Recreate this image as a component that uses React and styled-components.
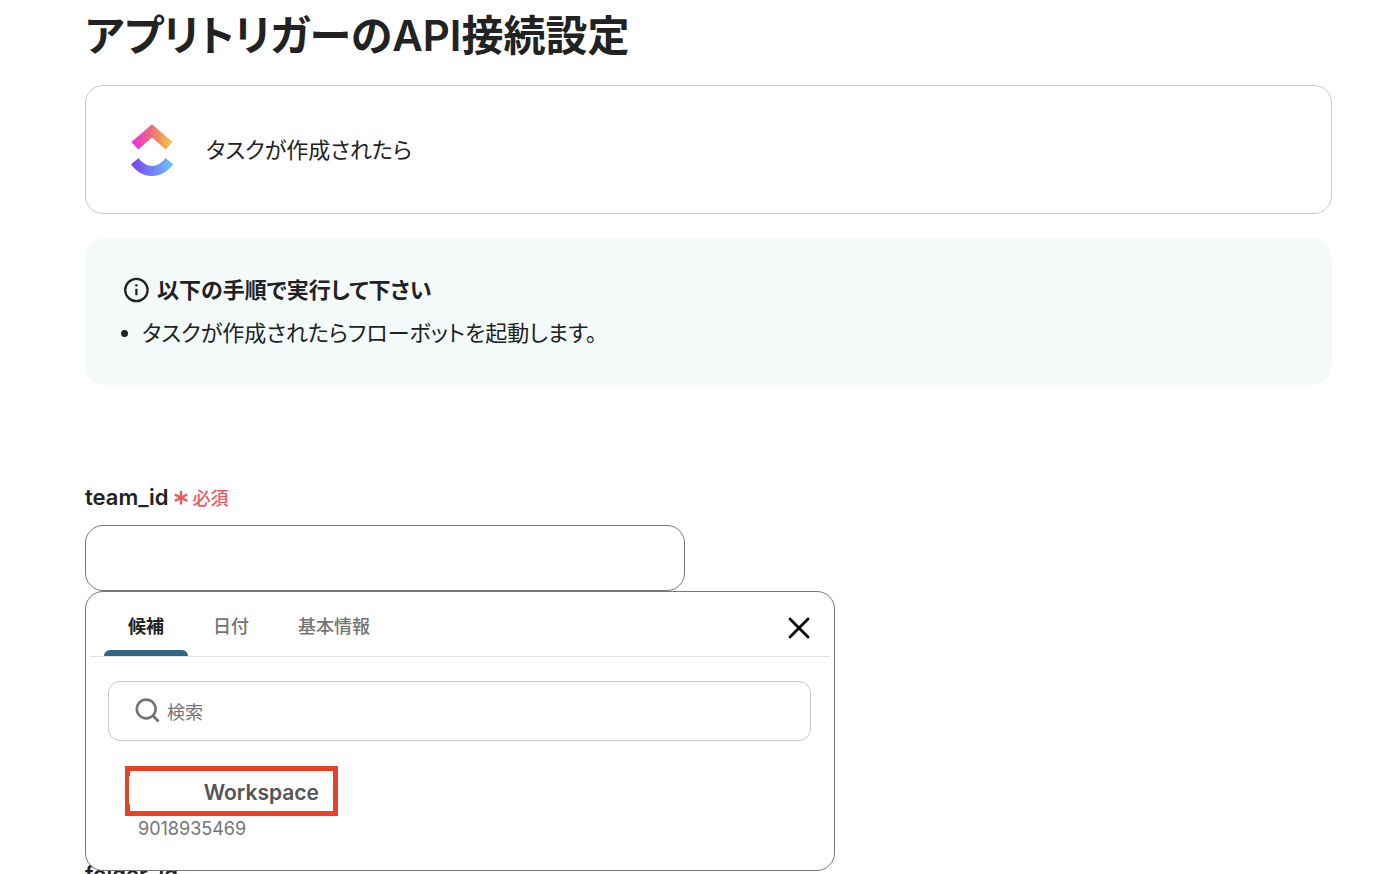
import { useState } from "react";
import styled, { createGlobalStyle } from "styled-components";

const GlobalStyle = createGlobalStyle`
  *, *::before, *::after {
    box-sizing: border-box;
  }

  html {
    overflow: hidden;
  }

  body {
    margin: 0;
    background: #fff;
    color: #222;
    font-family: Inter, "Noto Sans CJK JP", sans-serif;
    font-feature-settings: "palt";
  }

  button, input {
    font: inherit;
    font-feature-settings: inherit;
  }
`;

const Page = styled.main`
  padding: 4px 44px 0 85px;
`;

const Title = styled.h1`
  margin: 0 0 17px;
  font-size: 42px;
  line-height: 64px;
  font-weight: 600;
`;

const TriggerCard = styled.section`
  display: flex;
  align-items: center;
  gap: 32px;
  padding: 38px 45px 37px;
  border: 1px solid #c8c8c8;
  border-radius: 18px;
  font-size: 22px;
  line-height: 30px;
`;

const Notice = styled.section`
  margin: 24px 0 96px;
  padding: 36px 38px;
  border-radius: 20px;
  background: #f4fafa;
  font-size: 22px;
  line-height: 32px;
`;

const NoticeTitle = styled.h2`
  display: flex;
  align-items: center;
  gap: 8px;
  margin: 0 0 11px;
  font-size: 22px;
  line-height: 32px;
  font-weight: 600;
`;

const NoticeList = styled.ul`
  margin: 0;
  padding-left: 19px;
`;

const Field = styled.div`
  position: relative;
  min-height: 377px;
`;

const Label = styled.label`
  display: flex;
  align-items: center;
  gap: 5px;
  height: 32px;
  margin-bottom: 12px;
  font-size: 22px;
  font-weight: 600;
`;

const Required = styled.span`
  display: flex;
  align-items: center;
  gap: 5px;
  color: #eb5a5f;
  font-size: 18px;
  font-weight: 500;
`;

const TextInput = styled.input`
  display: block;
  width: 600px;
  max-width: 100%;
  height: 66px;
  padding: 0 24px;
  border: 1px solid #777;
  border-radius: 18px;
  background: #fff;
  font-size: 22px;
  outline: none;
`;

const Popup = styled.div`
  position: absolute;
  top: 100%;
  left: 0;
  z-index: 1;
  width: 750px;
  height: 280px;
  border: 1px solid #777;
  border-radius: 18px;
  background: #fff;
`;

const InputWrap = styled.div`
  position: relative;
`;

const TabBar = styled.div`
  display: flex;
  align-items: stretch;
  gap: 1px;
  height: 65px;
  margin: 0 4px;
  padding: 0 15px 0 14px;
  border-bottom: 1px solid #e2e2e2;
`;

const Tab = styled.button`
  display: flex;
  flex-direction: column;
  justify-content: space-between;
  padding: 19px 0 0;
  border: none;
  background: none;
  color: ${({ $active }) => ($active ? "#222" : "#757575")};
  font-size: 18px;
  line-height: 32px;
  font-weight: ${({ $active }) => ($active ? 600 : 500)};
  cursor: pointer;

  span {
    padding: 0 24px;
  }

  &::after {
    content: "";
    width: 100%;
    height: 6px;
    border-radius: 6px 6px 0 0;
    background: ${({ $active }) => ($active ? "#30687f" : "transparent")};
  }
`;

const CloseButton = styled.button`
  display: flex;
  align-items: center;
  justify-content: center;
  width: 32px;
  margin-left: auto;
  padding: 8px 0 0;
  border: none;
  background: none;
  color: #000;
  cursor: pointer;
`;

const SearchBox = styled.label`
  display: flex;
  align-items: center;
  gap: 6px;
  height: 60px;
  margin: 24px 23px 25px 22px;
  padding: 0 26px;
  border: 1px solid #c8c8c8;
  border-radius: 12px;
  color: #757575;
`;

const SearchInput = styled.input`
  flex: 1;
  min-width: 0;
  padding: 4px 0 0;
  border: none;
  background: none;
  font-size: 18px;
  line-height: 32px;
  outline: none;

  &::placeholder {
    color: #757575;
    opacity: 1;
  }
`;

const Candidate = styled.button`
  display: block;
  margin-left: 39px;
  padding: 0;
  border: none;
  background: none;
  text-align: left;
  cursor: pointer;
`;

const CandidateName = styled.span`
  position: relative;
  display: flex;
  align-items: center;
  justify-content: flex-end;
  width: 213px;
  height: 50px;
  padding: 2px 14px 0 0;
  border: 5px solid #ea4025;
  color: #555;
  font-size: 21px;
  font-weight: 600;

  /* blank patch over the hidden part of the name */
  &::before {
    content: "";
    position: absolute;
    top: 5px;
    bottom: 7px;
    left: -1px;
    width: 72px;
    background: #fff;
  }
`;

const CandidateId = styled.span`
  display: block;
  padding-left: 13px;
  color: #757575;
  font-size: 18px;
  line-height: 26px;
`;

const TABS = ["候補", "日付", "基本情報"];

function ClickUpLogo() {
  return (
    <svg width="43" height="52" viewBox="0 0 43 52" aria-hidden="true">
      <defs>
        <linearGradient id="roof" x1="0" x2="1">
          <stop offset="0" stopColor="#ec2be0" />
          <stop offset="0.5" stopColor="#ed6f78" />
          <stop offset="1" stopColor="#f8cd3c" />
        </linearGradient>
        <linearGradient id="smile" x1="0" x2="1">
          <stop offset="0" stopColor="#7b3ff5" />
          <stop offset="1" stopColor="#6cc4fa" />
        </linearGradient>
      </defs>
      <path fill="url(#roof)" d="M21 0.3 41.5 18 34.7 25.6 21 13.6 7.3 25.6 0.5 18Z" />
      <path
        fill="url(#smile)"
        d="M0 40.2 7.6 34C11.6 39.4 16 41.9 21 41.9S30.4 39.4 34.4 34l7.8 6.2C36.6 47.8 29.4 52 21 52S5.4 47.8 0 40.2Z"
      />
    </svg>
  );
}

function InfoIcon() {
  return (
    <svg width="26" height="26" viewBox="0 0 26 26" fill="none" aria-hidden="true">
      <circle cx="13.4" cy="13" r="11.2" stroke="currentColor" strokeWidth="2.3" />
      <path d="M13.4 11.7v6.5M13.4 7.2v2.2" stroke="currentColor" strokeWidth="2.2" />
    </svg>
  );
}

function AsteriskIcon() {
  return (
    <svg width="14" height="16" viewBox="0 0 14 16" fill="none" aria-hidden="true">
      <path
        d="M7 2v13.4M0.8 5.5l12.4 6.4M13.2 5.5 0.8 11.9"
        stroke="currentColor"
        strokeWidth="2.4"
      />
    </svg>
  );
}

function SearchIcon() {
  return (
    <svg width="26" height="26" viewBox="0 0 26 26" fill="none" aria-hidden="true">
      <circle cx="11.2" cy="11" r="9.4" stroke="currentColor" strokeWidth="2.6" />
      <path d="m17.8 17.6 5.8 5.8" stroke="currentColor" strokeWidth="2.8" />
    </svg>
  );
}

function CloseIcon() {
  return (
    <svg width="22" height="22" viewBox="0 0 22 22" fill="none" aria-hidden="true">
      <path
        d="m2 2 18 18M20 2 2 20"
        stroke="currentColor"
        strokeWidth="2.8"
        strokeLinecap="round"
      />
    </svg>
  );
}

function CandidatePopup({ onSelect, onClose }) {
  const [tab, setTab] = useState(TABS[0]);

  return (
    <Popup>
      <TabBar role="tablist">
        {TABS.map((name) => (
          <Tab
            key={name}
            type="button"
            role="tab"
            aria-selected={tab === name}
            $active={tab === name}
            onClick={() => setTab(name)}
          >
            <span>{name}</span>
          </Tab>
        ))}
        <CloseButton type="button" aria-label="閉じる" onClick={onClose}>
          <CloseIcon />
        </CloseButton>
      </TabBar>
      <SearchBox>
        <SearchIcon />
        <SearchInput type="text" placeholder="検索" aria-label="検索" />
      </SearchBox>
      <Candidate type="button" onClick={() => onSelect("9018935469")}>
        <CandidateName>Workspace</CandidateName>
        <CandidateId>9018935469</CandidateId>
      </Candidate>
    </Popup>
  );
}

function App() {
  const [teamId, setTeamId] = useState("");
  const [open, setOpen] = useState(true);

  const select = (id) => {
    setTeamId(id);
    setOpen(false);
  };

  return (
    <>
      <GlobalStyle />
      <Page>
        <Title>アプリトリガーのAPI接続設定</Title>
        <TriggerCard>
          <ClickUpLogo />
          <span>タスクが作成されたら</span>
        </TriggerCard>
        <Notice>
          <NoticeTitle>
            <InfoIcon />
            以下の手順で実行して下さい
          </NoticeTitle>
          <NoticeList>
            <li>タスクが作成されたらフローボットを起動します。</li>
          </NoticeList>
        </Notice>
        <Field>
          <Label htmlFor="team_id">
            team_id
            <Required>
              <AsteriskIcon />
              必須
            </Required>
          </Label>
          <InputWrap>
            <TextInput
              id="team_id"
              value={teamId}
              onChange={(e) => setTeamId(e.target.value)}
              onFocus={() => setOpen(true)}
            />
            {open && <CandidatePopup onSelect={select} onClose={() => setOpen(false)} />}
          </InputWrap>
        </Field>
        <Field>
          <Label htmlFor="folder_id">folder_id</Label>
          <TextInput id="folder_id" />
        </Field>
      </Page>
    </>
  );
}

export default App;
